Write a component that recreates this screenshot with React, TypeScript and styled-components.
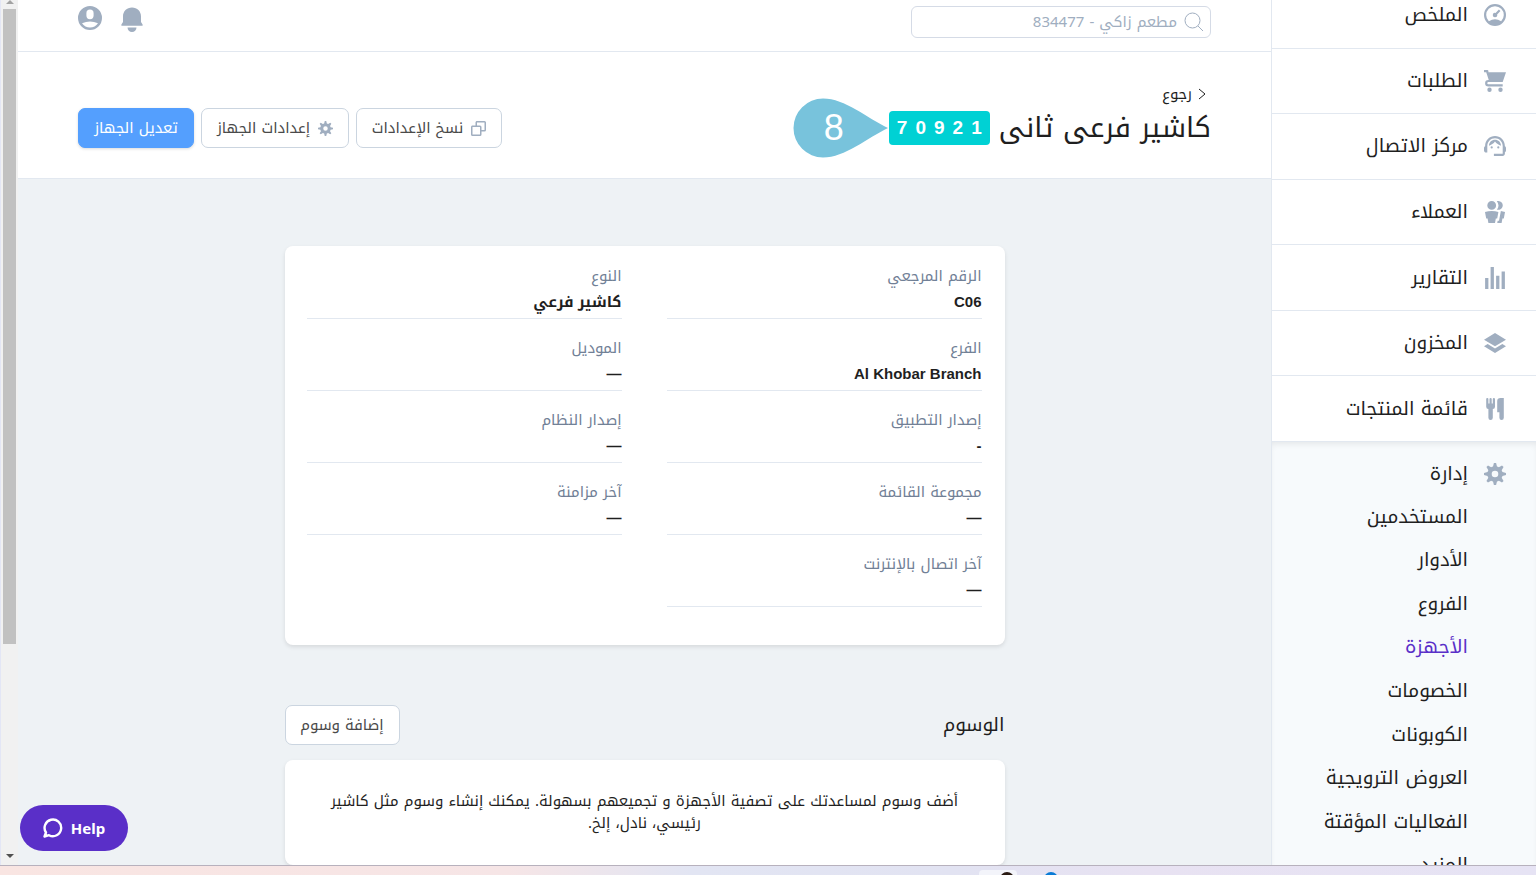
import React from "react";
import styled, { createGlobalStyle, css } from "styled-components";

const latin = `"Liberation Sans", "Noto Kufi Arabic", "Noto Sans Arabic", "DejaVu Sans", sans-serif`;
const arabic = `"Noto Kufi Arabic", "Noto Sans Arabic", "DejaVu Sans", "Liberation Sans", sans-serif`;

const GlobalStyle = createGlobalStyle`
  *, *::before, *::after { box-sizing: border-box; }
  body {
    margin: 0;
    background: #eef2f5;
    color: #1f1f1f;
    font-family: ${arabic};
    font-size: 15px;
  }
  button, input { font: inherit; }
  a { color: inherit; text-decoration: none; }
  h1, h2, p, dl, dd, ul { margin: 0; padding: 0; }
  ul { list-style: none; }
`;

const Screen = styled.div`
  display: flex;
  flex-direction: column;
  height: 100vh;
  overflow: hidden;
`;

const Browser = styled.div`
  display: flex;
  flex: 1;
  min-height: 0;
`;

/* Navigation */

const Sidebar = styled.aside`
  flex: 0 0 265px;
  overflow: hidden;
  background: #f7fafc;
  border-left: 1px solid #e2e8f0;
`;

const MainNav = styled.ul`
  display: grid;
  grid-auto-rows: 1fr;
  height: 459px;
  margin-top: -17px;
  background: #fff;
`;

const MainItem = styled.li`
  display: flex;
  border-bottom: 1px solid #e2e8f0;
`;

const navRow = css`
  display: flex;
  align-items: center;
  gap: 16px;
  width: 100%;
  padding: 0 30px;
  font-size: 19px;
  line-height: 24px;
  svg { flex: none; color: #a0aec0; }
`;

const NavLink = styled.a`
  ${navRow}
`;

const Management = styled.div`
  padding-top: 11px;
  box-shadow: inset 0 4px 6px -2px rgba(0, 0, 0, 0.08);
`;

const ManagementLink = styled.a`
  ${navRow}
  height: 42px;
`;

const SubNav = styled.ul`
  display: grid;
  grid-auto-rows: 1fr;
  height: 392px;
`;

const SubLink = styled.a<{ $active?: boolean }>`
  display: flex;
  align-items: center;
  height: 100%;
  padding: 0 68px 0 30px;
  font-size: 19px;
  line-height: 24px;
  color: ${(p) => (p.$active ? "#5a2fc8" : "inherit")};
`;

/* Page */

const Page = styled.main`
  flex: 1;
  min-width: 0;
  overflow: hidden;
  background: #eef2f5;
`;

const TopBar = styled.header`
  display: flex;
  align-items: flex-start;
  justify-content: space-between;
  height: 52px;
  padding: 6px 60px;
  background: #fff;
  border-bottom: 1px solid #e2e8f0;
`;

const SearchBox = styled.label`
  display: flex;
  align-items: center;
  gap: 7px;
  width: 300px;
  height: 32px;
  padding: 0 6px;
  border: 1px solid #d5dbe6;
  border-radius: 6px;
  color: #a0aec0;
`;

const SearchInput = styled.input`
  flex: 1;
  min-width: 0;
  height: 30px;
  padding: 0;
  border: 0;
  outline: 0;
  background: none;
  line-height: 30px;
  &::placeholder { color: #a0aec0; opacity: 1; }
`;

const TopActions = styled.div`
  display: flex;
  align-items: flex-start;
  gap: 19px;
`;

const IconButton = styled.button`
  display: flex;
  padding: 0;
  border: 0;
  background: none;
  color: #a0aec0;
`;

const TitleBar = styled.section`
  display: flex;
  align-items: flex-end;
  justify-content: space-between;
  height: 127px;
  padding: 0 60px 30px;
  background: #fff;
  border-bottom: 1px solid #e2e8f0;
`;

const TitleBlock = styled.div`
  display: flex;
  flex-direction: column;
  align-items: flex-start;
  gap: 2px;
`;

const BackLink = styled.a`
  display: flex;
  align-items: center;
  gap: 6px;
  height: 24px;
  padding-right: 5px;
  line-height: 24px;
`;

const TitleRow = styled.div`
  display: flex;
  align-items: center;
  gap: 9px;
  height: 40px;
`;

const Title = styled.h1`
  font-size: 28px;
  font-weight: 400;
  line-height: 40px;
`;

const Code = styled.div`
  position: relative;
  display: flex;
  justify-content: center;
  gap: 8px;
  width: 101px;
  border-radius: 4px;
  background: #00d1d4;
  color: #fff;
  font-family: ${latin};
  font-size: 19px;
  font-weight: 700;
  line-height: 34px;
  direction: ltr;
`;

const Pin = styled.div`
  position: absolute;
  right: 100%;
  top: 50%;
  display: flex;
  width: 96px;
  height: 60px;
  margin-top: -30px;
  svg { position: absolute; inset: 0; }
`;

const PinLabel = styled.span`
  position: relative;
  width: 82px;
  text-align: center;
  font-size: 36px;
  font-weight: 400;
  line-height: 60px;
`;

const Actions = styled.div`
  display: flex;
  gap: 7px;
`;

const Button = styled.button<{ $primary?: boolean; $width: number }>`
  display: flex;
  align-items: center;
  justify-content: center;
  gap: 8px;
  width: ${(p) => p.$width}px;
  height: 40px;
  padding: 0;
  border: 1px solid ${(p) => (p.$primary ? "#549ffe" : "#cbd5e0")};
  border-radius: 7px;
  background: ${(p) => (p.$primary ? "#549ffe" : "#fff")};
  color: ${(p) => (p.$primary ? "#fff" : "#4a4a4a")};
  box-shadow: ${(p) => (p.$primary ? "0 1px 3px rgba(0, 0, 0, 0.15)" : "none")};
  line-height: 24px;
  white-space: nowrap;
  svg { flex: none; color: #a0aec0; }
`;

const Content = styled.div`
  max-width: 720px;
  margin: 0 auto;
  padding-top: 67px;
`;

const Card = styled.section`
  border-radius: 8px;
  background: #fff;
  box-shadow: 0 2px 4px rgba(0, 0, 0, 0.1);
`;

const Details = styled.dl`
  display: grid;
  grid-template-columns: 1fr 1fr;
  gap: 17px 45px;
  padding: 18px 23px 38px 22px;
`;

const Field = styled.div`
  padding-bottom: 4px;
  border-bottom: 1px solid #e2e8f0;
`;

const FieldName = styled.dt`
  height: 24px;
  margin-bottom: 2px;
  line-height: 24px;
  color: #718096;
`;

const FieldValue = styled.dd`
  height: 24px;
  font-family: ${latin};
  font-weight: 700;
  line-height: 24px;
`;

const SectionHead = styled.div`
  display: flex;
  align-items: center;
  justify-content: space-between;
  margin: 60px 0 15px;
`;

const SectionTitle = styled.h2`
  font-size: 19px;
  font-weight: 400;
  line-height: 24px;
`;

const EmptyText = styled.p`
  padding: 30px 40px 31px;
  line-height: 22px;
  text-align: center;
`;

/* Window frame */

const ScrollTrack = styled.div`
  display: flex;
  flex: 0 0 18px;
  flex-direction: column;
  align-items: center;
  justify-content: space-between;
  padding-bottom: 7px;
  border-left: 1px solid #e3e6f5;
  background: #f1f1f1;
`;

const ScrollThumb = styled.div`
  width: 13px;
  height: 74%;
  margin: 5px 0 auto;
  background: #c1c1c1;
`;

const Arrow = styled.span<{ $up?: boolean }>`
  border: solid transparent;
  border-width: ${(p) => (p.$up ? "0 4px 4px" : "4px 4px 0")};
  border-color: ${(p) => (p.$up ? "transparent transparent #a3a3a3" : "#505050 transparent transparent")};
`;

const Taskbar = styled.footer`
  display: flex;
  flex: 0 0 10px;
  align-items: flex-start;
  gap: 27px;
  padding: 4px 478px 0 0;
  overflow: hidden;
  border-top: 1px solid #b7b1bd;
  background: linear-gradient(90deg, #f9e5e2 0%, #f6e5e6 33%, #e2e5f3 45%, #e2e3f2 62%, #e8e2f2 75%, #e6e3f4 100%);
`;

const TaskTile = styled.span`
  flex: none;
  width: 38px;
  height: 20px;
  padding: 2px 3px;
  border-radius: 4px;
  background: #f3f4fa;
`;

const TaskDot = styled.span<{ $color: string }>`
  display: block;
  flex: none;
  width: 14px;
  height: 14px;
  margin-top: ${(p) => (p.$color === "#0a7bd6" ? "2px" : "0")};
  border-radius: 50%;
  background: ${(p) => p.$color};
`;

const Help = styled.button`
  position: fixed;
  bottom: 24px;
  left: 20px;
  display: flex;
  align-items: center;
  justify-content: center;
  gap: 8px;
  width: 108px;
  height: 46px;
  padding: 0;
  border: 0;
  border-radius: 23px;
  background: #5a2fc8;
  color: #fff;
  font-family: "Noto Sans", sans-serif;
  font-weight: 700;
  direction: ltr;
`;

/* Icons on a 20-unit grid */

const shapes = {
  dashboard:
    "M10 20a10 10 0 1 1 0-20 10 10 0 0 1 0 20zm-5.6-4.29a9.95 9.95 0 0 1 11.2 0 8 8 0 1 0-11.2 0zm6.12-7.64l3.02-3.02 1.41 1.41-3.02 3.02a2 2 0 1 1-1.41-1.41z",
  cart: "M4 2h16l-3 9H4a1 1 0 1 0 0 2h13v2H4a3 3 0 0 1 0-6h.33L3 5 2 2H0V0h3a1 1 0 0 1 1 1v1zm1 18a2 2 0 1 1 0-4 2 2 0 0 1 0 4zm10 0a2 2 0 1 1 0-4 2 2 0 0 1 0 4z",
  users:
    "M7 8a4 4 0 1 1 0-8 4 4 0 0 1 0 8zm0 1c2.15 0 4.2.4 6.1 1.09L12 16h-1.25L10 20H4l-.75-4H2L.9 10.09A17.93 17.93 0 0 1 7 9zm8.31.17c1.32.18 2.59.48 3.8.92L18 16h-1.25L16 20h-3.96l.37-2h1.25l1.65-8.83zM13 0a4 4 0 1 1-1.33 7.76 5.96 5.96 0 0 0 0-7.52C12.1.1 12.53 0 13 0z",
  chart: "M1 10h3v10H1V10zM6 0h3v20H6V0zm5 8h3v12h-3V8zm5-4h3v16h-3V4z",
  layers: "M10 1l10 6-10 6L0 7l10-6zm6.67 10L20 13l-10 6-10-6 3.33-2L10 15l6.67-4z",
  food: "M18 11v7a2 2 0 0 1-4 0v-5h-2V3a3 3 0 0 1 3-3h3v11zM4 10a2 2 0 0 1-2-2V1a1 1 0 0 1 2 0v4h1V1a1 1 0 0 1 2 0v4h1V1a1 1 0 0 1 2 0v7a2 2 0 0 1-2 2v8a2 2 0 0 1-4 0v-8z",
  cog: "M3.94 6.5L2.22 3.64l1.42-1.42L6.5 3.94c.52-.3 1.1-.54 1.7-.7L9 0h2l.8 3.24c.6.16 1.18.4 1.7.7l2.86-1.72 1.42 1.42-1.72 2.86c.3.52.54 1.1.7 1.7L20 9v2l-3.24.8c-.16.6-.4 1.18-.7 1.7l1.72 2.86-1.42 1.42-2.86-1.72c-.52.3-1.1.54-1.7.7L11 20H9l-.8-3.24c-.6-.16-1.18-.4-1.7-.7l-2.86 1.72-1.42-1.42 1.72-2.86c-.3-.52-.54-1.1-.7-1.7L0 11V9l3.24-.8c.16-.6.4-1.18.7-1.7zM10 13a3 3 0 1 0 0-6 3 3 0 0 0 0 6z",
  user: "M10 20a10 10 0 1 1 0-20 10 10 0 0 1 0 20zM7 6v2a3 3 0 1 0 6 0V6a3 3 0 1 0-6 0zm-3.65 8.44a8 8 0 0 0 13.3 0 15.94 15.94 0 0 0-13.3 0z",
  copy: "M6 6V2c0-1.1.9-2 2-2h10a2 2 0 0 1 2 2v10a2 2 0 0 1-2 2h-4v4a2 2 0 0 1-2 2H2a2 2 0 0 1-2-2V8c0-1.1.9-2 2-2h4zm2 0h4a2 2 0 0 1 2 2v4h4V2H8v4zM2 8v10h10V8H2z",
};

type Shape = keyof typeof shapes;

const Icon = ({ name, size = 22 }: { name: Shape; size?: number }) => (
  <svg width={size} height={size} viewBox="0 0 20 20" fill="currentColor" aria-hidden="true">
    <path d={shapes[name]} />
  </svg>
);

const AgentIcon = () => (
  <svg width="22" height="22" viewBox="2 2 20 20" fill="currentColor" aria-hidden="true">
    <path d="M21 12.220C21 6.730 16.740 3 12 3c-4.690 0-9 3.650-9 9.280-.6.340-1 .980-1 1.720v2c0 1.100.9 2 2 2h1v-6.100c0-3.870 3.130-7 7-7s7 3.130 7 7V19h-8v2h8c1.100 0 2-.9 2-2v-1.220c.590-.310 1-.920 1-1.640v-2.300c0-.7-.410-1.310-1-1.620z" />
    <circle cx="9" cy="13.300" r="1" />
    <circle cx="15" cy="13.300" r="1" />
    <path d="M6.500 11.800C6.700 8.400 9 6.300 12 6.300s5.300 2.100 5.500 5.500C15.400 11 13.300 9.800 12 7.900c-1.300 1.900-3.400 3.100-5.500 3.900z" />
  </svg>
);

const BellIcon = () => (
  <svg width="22" height="27" viewBox="0 -1 22 27" fill="currentColor" aria-hidden="true">
    <path d="M11 0.500C5.800 0.500 2 4.300 2 9.500V15L0.400 17.400V18.700H21.600V17.400L20 15V9.500C20 4.300 16.200 0.500 11 0.500ZM6.500 20.500H15.500C15.500 23.200 13.500 25 11 25S6.500 23.200 6.500 20.500Z" />
  </svg>
);

const SearchIcon = () => (
  <svg width="20" height="20" viewBox="0 0 20 20" fill="none" stroke="currentColor" aria-hidden="true">
    <circle cx="8.500" cy="8.500" r="7.500" />
    <path d="M14 14l5 5" />
  </svg>
);

const mainItems: { label: string; icon: Shape | "agent" }[] = [
  { label: "الملخص", icon: "dashboard" },
  { label: "الطلبات", icon: "cart" },
  { label: "مركز الاتصال", icon: "agent" },
  { label: "العملاء", icon: "users" },
  { label: "التقارير", icon: "chart" },
  { label: "المخزون", icon: "layers" },
  { label: "قائمة المنتجات", icon: "food" },
];

const subItems = [
  "المستخدمين",
  "الأدوار",
  "الفروع",
  "الأجهزة",
  "الخصومات",
  "الكوبونات",
  "العروض الترويجية",
  "الفعاليات المؤقتة",
  "المزيد",
];

const fields = [
  ["الرقم المرجعي", "C06"],
  ["النوع", "كاشير فرعي"],
  ["الفرع", "Al Khobar Branch"],
  ["الموديل", "—"],
  ["إصدار التطبيق", "-"],
  ["إصدار النظام", "—"],
  ["مجموعة القائمة", "—"],
  ["آخر مزامنة", "—"],
  ["آخر اتصال بالإنترنت", "—"],
];

export default function App() {
  return (
    <Screen dir="rtl" lang="ar">
      <GlobalStyle />
      <Browser>
        <Sidebar>
          <MainNav>
            {mainItems.map(({ label, icon }) => (
              <MainItem key={label}>
                <NavLink href="#">
                  {icon === "agent" ? <AgentIcon /> : <Icon name={icon} />}
                  {label}
                </NavLink>
              </MainItem>
            ))}
          </MainNav>
          <Management>
            <ManagementLink href="#">
              <Icon name="cog" />
              إدارة
            </ManagementLink>
            <SubNav>
              {subItems.map((label) => (
                <li key={label}>
                  <SubLink href="#" $active={label === "الأجهزة"}>
                    {label}
                  </SubLink>
                </li>
              ))}
            </SubNav>
          </Management>
        </Sidebar>

        <Page>
          <TopBar>
            <SearchBox>
              <SearchIcon />
              <SearchInput aria-label="بحث" placeholder="مطعم زاكي - 834477" />
            </SearchBox>
            <TopActions>
              <IconButton aria-label="الإشعارات">
                <BellIcon />
              </IconButton>
              <IconButton aria-label="الحساب">
                <Icon name="user" size={24} />
              </IconButton>
            </TopActions>
          </TopBar>

          <TitleBar>
            <TitleBlock>
              <BackLink href="#">
                <svg width="8" height="12" viewBox="0 0 8 12" fill="none" stroke="currentColor" aria-hidden="true">
                  <path d="M1 1l6 5-6 5" />
                </svg>
                رجوع
              </BackLink>
              <TitleRow>
                <Title>كاشير فرعى ثانى</Title>
                <Code>
                  {"70921".split("").map((digit, i) => (
                    <span key={i}>{digit}</span>
                  ))}
                  <Pin>
                    <svg width="96" height="60" viewBox="0 0 96 60" aria-hidden="true">
                      <path d="M95 30C74 20 52 0.500 30 0.500a29.500 29.500 0 0 0 0 59C52 59.500 74 40 95 30Z" fill="#78c3dc" />
                    </svg>
                    <PinLabel>8</PinLabel>
                  </Pin>
                </Code>
              </TitleRow>
            </TitleBlock>
            <Actions>
              <Button $width={146}>
                <Icon name="copy" size={15} />
                نسخ الإعدادات
              </Button>
              <Button $width={148}>
                <Icon name="cog" size={15} />
                إعدادات الجهاز
              </Button>
              <Button $width={116} $primary>
                تعديل الجهاز
              </Button>
            </Actions>
          </TitleBar>

          <Content>
            <Card>
              <Details>
                {fields.map(([name, value]) => (
                  <Field key={name}>
                    <FieldName>{name}</FieldName>
                    <FieldValue>{value}</FieldValue>
                  </Field>
                ))}
              </Details>
            </Card>
            <SectionHead>
              <SectionTitle>الوسوم</SectionTitle>
              <Button $width={115}>إضافة وسوم</Button>
            </SectionHead>
            <Card>
              <EmptyText>
                أضف وسوم لمساعدتك على تصفية الأجهزة و تجميعهم بسهولة. يمكنك إنشاء وسوم مثل كاشير رئيسي، نادل، إلخ.
              </EmptyText>
            </Card>
          </Content>
        </Page>

        <ScrollTrack>
          <Arrow $up />
          <ScrollThumb />
          <Arrow />
        </ScrollTrack>
      </Browser>

      <Taskbar>
        <TaskDot $color="#0a7bd6" />
        <TaskTile>
          <TaskDot $color="#2a1a12" />
        </TaskTile>
      </Taskbar>

      <Help>
        <svg width="20" height="20" viewBox="0 0 20 20" fill="none" stroke="currentColor" strokeWidth="2.400" strokeLinejoin="round" aria-hidden="true">
          <path d="M1.500 18.500L3 14.500A8.300 8.300 0 1 1 6 17.200Z" />
        </svg>
        Help
      </Help>
    </Screen>
  );
}
